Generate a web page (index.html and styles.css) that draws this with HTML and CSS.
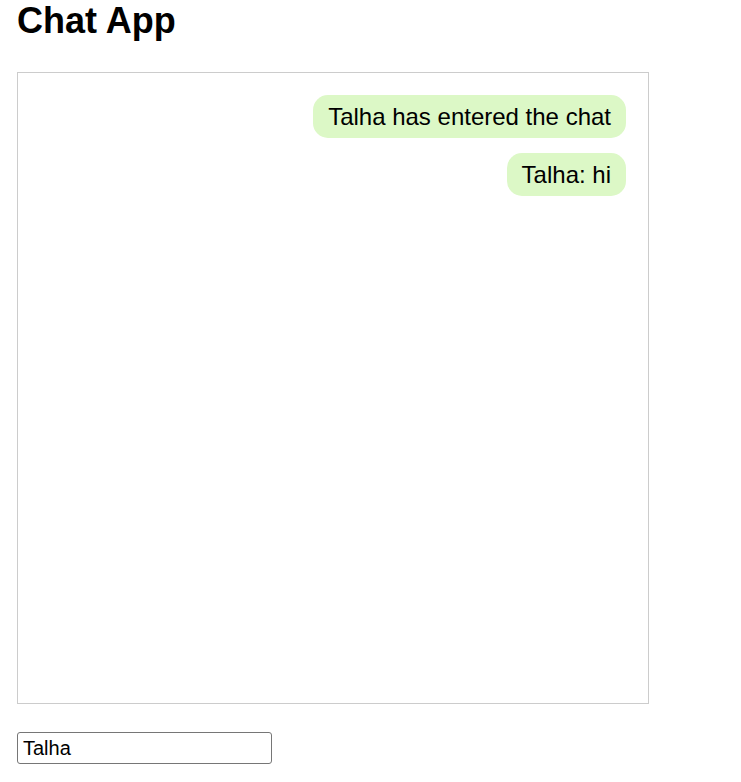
FILE: index.html
```html
<!DOCTYPE html>
<html>
<head>
<meta charset="utf-8">
<title>Chat App</title>
<link rel="stylesheet" href="styles.css">
</head>
<body>
<h1 class="title">Chat App</h1>
<div class="chat">
  <div class="msg">Talha has entered the chat</div>
  <div class="msg">Talha: hi</div>
</div>
<input class="name" type="text" value="Talha">
</body>
</html>
```
FILE: styles.css
```css
html, body {
  margin: 0;
  background: #fff;
}
body {
  padding: 0 17px;
  font-family: "Liberation Sans", Arial, sans-serif;
  color: #000;
}
.title {
  margin: 0 0 31px;
  font-size: 36px;
  font-weight: bold;
  line-height: 41px;
}
.chat {
  box-sizing: border-box;
  width: 632px;
  height: 632px;
  border: 1px solid #ccc;
  padding: 22px;
  display: flex;
  flex-direction: column;
  align-items: flex-end;
  gap: 15px;
}
.msg {
  background: #dcf8c6;
  border-radius: 15px;
  padding: 7.5px 15px;
  font-size: 24px;
  line-height: 28px;
}
.name {
  display: block;
  box-sizing: border-box;
  margin-top: 28px;
  width: 255px;
  height: 32px;
  padding: 0 5px;
  border: 1px solid #767676;
  border-radius: 3px;
  font-family: "Liberation Sans", Arial, sans-serif;
  font-size: 20px;
  color: #000;
}
```
